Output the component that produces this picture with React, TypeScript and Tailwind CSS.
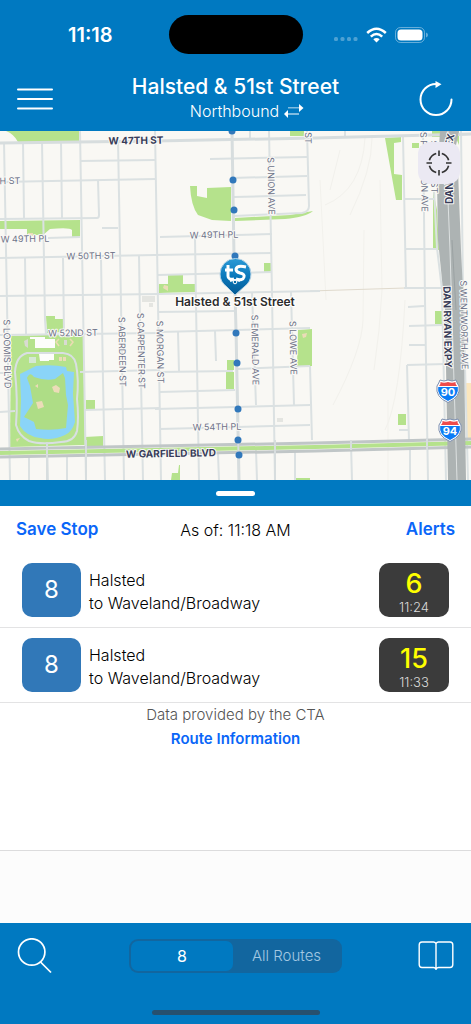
import { useState } from "react";

type Arrival = {
  id: number;
  route: string;
  name: string;
  destination: string;
  minutes: number;
  time: string;
};

const arrivals: Arrival[] = [
  {
    id: 1,
    route: "8",
    name: "Halsted",
    destination: "to Waveland/Broadway",
    minutes: 6,
    time: "11:24",
  },
  {
    id: 2,
    route: "8",
    name: "Halsted",
    destination: "to Waveland/Broadway",
    minutes: 15,
    time: "11:33",
  },
];

const streets = [
  // east-west
  "M80 161L155 160",
  "M0 182L155 179",
  "M0 219L97 218Q99 218 99 215L98 180",
  "M48 238L80 237",
  "M102 228L118 228",
  "M0 258L155 255L272 253",
  "M0 296L160 294L320 291",
  "M0 335L160 333",
  "M0 373L12 373M80 372L160 370",
  "M0 412L15 411M85 410L160 408",
  "M210 159L307 157",
  "M232 178L307 176",
  "M234 197L306 195",
  "M234 216L302 213Q309 212 309 206L307 131",
  "M160 237L272 234",
  "M158 275L272 272",
  "M158 312L234 311",
  "M160 332L310 328",
  "M160 372L233 371M237 369L310 366",
  "M160 392L235 390",
  "M155 409L310 405",
  "M160 429L310 425",
  "M405 199L434 199M405 249L438 249M404 288L442 288",
  "M408 307L424 306M409 326L442 325M409 345L425 345M407 365L445 364M399 430L408 430",
  // north-south
  "M4 142L7 304L10 480",
  "M23 142L24 218M25 258L26 334M29 455L29 480",
  "M42 142L45 320L46 334M47 442L48 480",
  "M61 142L62 218M63 258L64 334M67 455L67 480",
  "M80 131L83 304L86 480",
  "M101 258L103 380L105 480",
  "M118 140L121 304L124 480",
  "M139 256L141 380L143 480",
  "M155 131L158 304L161 480",
  "M178 332L179 371M215 331L216 361",
  "M195 238L196 304L199 480M218 454L219 480",
  "M250 131L250 138M345 131L345 136",
  "M269 131L272 294L275 480",
  "M252 292L256 405M256 450L257 480",
  "M291 292L294 405M295 450L295 480",
  "M310 366L312 440M351 444L352 480",
  "M403 136L406 288M407 365L409 441M410 447L410 480",
  "M423 131L425 300L428 480",
  "M434 190L437 248L442 290L446 480",
  "M461 131L463 290L468 480",
  "M459 135L471 134",
];

const stops = [
  [232, 131],
  [233, 180],
  [234, 210],
  [235, 256],
  [236, 333],
  [237, 363],
  [238, 409],
  [238, 440],
  [239, 455],
];

type Label = { text: string; x: number; y: number; angle?: number };

const labels: Label[] = [
  { text: "H ST", x: 10, y: 184 },
  { text: "W 49TH PL", x: 25, y: 242 },
  { text: "W 50TH ST", x: 91, y: 259 },
  { text: "W 49TH PL", x: 214, y: 238 },
  { text: "W 52ND ST", x: 73, y: 336 },
  { text: "W 54TH PL", x: 217, y: 430 },
  { text: "S UNION AVE", x: 268, y: 186, angle: 89 },
  { text: "ST", x: 305, y: 138, angle: 89 },
  { text: "S PRINCETON AVE", x: 421, y: 172, angle: 89 },
  { text: "S WELLS ST", x: 431, y: 167, angle: 89 },
  { text: "S LOOMIS BLVD", x: 4, y: 354, angle: 89 },
  { text: "S ABERDEEN ST", x: 119, y: 352, angle: 89 },
  { text: "S CARPENTER ST", x: 138, y: 351, angle: 89 },
  { text: "S MORGAN ST", x: 157, y: 352, angle: 89 },
  { text: "S EMERALD AVE", x: 252, y: 350, angle: 89 },
  { text: "S LOWE AVE", x: 290, y: 348, angle: 89 },
  { text: "S WENTWORTH AVE", x: 461, y: 325, angle: 89 },
];

const boldLabels: Label[] = [
  { text: "W 47TH ST", x: 136, y: 144 },
  { text: "W GARFIELD BLVD", x: 171, y: 457 },
  { text: "DAN RYAN EXPY", x: 444, y: 327, angle: 89 },
  { text: "DAN", x: 453, y: 193, angle: -90 },
  { text: "EX", x: 453, y: 141, angle: -75 },
];

const MapLabel = ({ label }: { label: Label }) => (
  <text
    textAnchor="middle"
    transform={`translate(${label.x} ${label.y}) rotate(${label.angle ?? -1})`}
  >
    {label.text}
  </text>
);

const Shield = ({ number, x, y }: { number: string; x: number; y: number }) => (
  <g transform={`translate(${x} ${y})`}>
    <path
      d="M-8 -11Q-4 -9 0 -11Q4 -9 8 -11Q9 -8 11 -5Q13 6 0 11.500Q-13 6 -11 -5Q-9 -8 -8 -11Z"
      fill="#fff"
      stroke="#7d8fb0"
      strokeWidth="1"
    />
    <path d="M-9 -5Q-7 -7 -7.500 -9Q-4 -7.500 0 -9Q4 -7.500 7.500 -9Q7 -7 9 -5Z" fill="#ee4b4b" />
    <path d="M-9.800 -4H9.800Q11.500 5 0 10Q-11.500 5 -9.800 -4Z" fill="#0b7bf5" />
    <text
      y="5"
      textAnchor="middle"
      fontSize="11"
      fontWeight="700"
      fill="#fff"
    >
      {number}
    </text>
  </g>
);

const StopMap = () => (
  <svg
    viewBox="0 131 471 349"
    preserveAspectRatio="xMidYMid slice"
    className="block h-full w-full"
    role="img"
    aria-label="Map of stops near Halsted & 51st Street"
  >
    <defs>
      <linearGradient id="pin" x1="0" y1="0" x2="0" y2="1">
        <stop offset="0" stopColor="#2b9ad6" />
        <stop offset="0.5" stopColor="#0b78bb" />
        <stop offset="1" stopColor="#055a94" />
      </linearGradient>
    </defs>
    <rect y="131" width="471" height="349" fill="#f9f8f4" />

    {/* rail yard */}
    <g fill="none" stroke="#f2f1ec" strokeWidth="1">
      <path d="M365 138Q362 190 325 205M372 138Q372 170 350 215M364 230L363 320Q362 350 333 405M380 180L382 290Q380 330 374 370M405 300Q400 400 385 430M388 400L388 480" />
      <path d="M320 180L326 300M340 150L330 190" />
    </g>
    <path d="M310 291L405 288" stroke="#e0dacd" strokeWidth="1" />
    <rect x="466" y="383" width="5" height="55" fill="#fbe6bd" />
    <path d="M142 296h13v6h-13zM149 303h4v4h-4zM277 418h6v4h-6z" fill="#e4e5e1" />

    {/* parks */}
    <g fill="#b5e28c">
      <path d="M6 131H79V141L18 142Q14 134 6 131Z" />
      <path d="M0 221L80 220V237H72V230Q70 227 50 229L43 235H27V229H0Z" />
      <path d="M190 186H197V196L207 198V188L231 187V221L212 220L198 215Q191 206 190 186Z" />
      <path d="M235 218L290 215L313 211Q306 217 285 219L235 221Z" />
      <path d="M264 263h7v9h-7zM290 131h14v5h-14zM412 143h7v5h-7z" />
      <path d="M159 284H168V275H183V284H195V292L159 293Z" />
      <path d="M385 138L401 137V142L394 143V174L402 175V200H396Z" />
      <path d="M433 190L437 210L439 250H433ZM432 131h8v6h-8zM453 131h6v14z" />
      <path d="M435 311h7v13h-7zM398 414h8v11h-8z" />
      <path d="M298 330L312 329V366H297Z" />
      <path d="M227 360h7v10h-7zM226 372h8v17h-8z" />
      <path d="M171 480L172 473H178L179 465H180V480ZM296 478h14v2h-14z" />
      <path d="M46 316H55V319H63V332L47 333Z" />
      <path d="M11 336L83 334L85 445L10 447Z" />
      <path d="M86 400h9v9h-9zM85 437L103 436V446H86Z" />
    </g>
    <path d="M30 337H45V339H55V348H35V339H30ZM39 354h15v6h-5v1h-9z" fill="#fdfdfb" />
    <path d="M29 357h7v6h-7z" fill="#d5e8d5" />
    <path d="M24 341l4-2v9l-3-2zM64 340h3v5h-3z" fill="#d9dbd2" />
    <path d="M59 339l-3 3l3 4M70 339l3 3l-3 4" fill="none" stroke="#ecdcb2" strokeWidth="1.500" />
    <path d="M59 357h3v4h-3zM63 357h3v4h-3zM28 233h5v3h-5zM302 334l5-1l-1 4l-3 1zM164 285l4 1v5l-5-3zM16 439l4-1l-3 4z" fill="#ecdcb8" />
    <path
      d="M20 374Q28 370 36 366Q52 364 66 367L67 371L74 372L73 394L75 422Q72 432 65 435Q52 441 40 438Q26 436 20 426L21 400Z"
      fill="#8ad4f8"
    />
    <path
      d="M27 378Q30 371 34 377Q45 381 55 379L63 373L65 378L66 395L68 405L66 428Q52 431 36 429L34 422L24 417L33 403L30 386Z"
      fill="#aedd86"
    />
    <path d="M52 387l4-2l4 3l-1 5l-5-1zM35 386l3-2v4zM36 402l6-1l2 6l-6 2z" fill="#ecdcb8" />
    <path
      d="M27 353L63 353Q74 354 76 364Q79 380 77 399Q79 418 77 431Q74 442 61 442Q40 445 29 441Q19 436 16 425Q18 400 15 372Q16 356 27 353Z"
      fill="none"
      stroke="#d9dfe2"
      strokeWidth="2"
    />

    {/* streets */}
    <g fill="none" stroke="#dbe1e2" strokeWidth="2">
      {streets.map((d) => (
        <path key={d} d={d} />
      ))}
    </g>
    <g fill="none" stroke="#d7ddde" strokeWidth="3">
      <path d="M0 143L155 141L315 138L471 134" />
      <path d="M232 131L234 256L236 330L239 480" />
    </g>
    <g fill="none">
      <path d="M0 453L155 450L315 447L471 443" stroke="#b5e28c" strokeWidth="4" />
      <path d="M0 449L155 446L315 443L471 439" stroke="#c0c6c7" strokeWidth="3" />
      <path d="M0 457L155 454L315 451L471 447" stroke="#c0c6c7" strokeWidth="3" />
      <path d="M236 330L239 480M47 442V480M86 440V480M275 440V480M351 440V450M427 438V450" stroke="#d7ddde" strokeWidth="2" />
    </g>

    {/* expressway */}
    <path d="M440 131H459L455 150L458 170L461 250L463 290L466 480H448L445 310L438 240L437 180Z" fill="#adb3b3" />
    <path d="M448 131L446 150L450 250L457 480" fill="none" stroke="#dde1e1" strokeWidth="1" />
    <path d="M452 240L456 310" fill="none" stroke="#9ba2a3" strokeWidth="1" />

    <g
      fontFamily="Inter, 'Liberation Sans', sans-serif"
      stroke="#faf9f6"
      strokeWidth="2"
      strokeLinejoin="round"
      paintOrder="stroke"
    >
      <g fill="#6d7288" fontSize="9">
        {labels.map((label, index) => (
          <MapLabel key={index} label={label} />
        ))}
      </g>
      <g fill="#383d5a" fontSize="10" fontWeight="700">
        {boldLabels.map((label, index) => (
          <MapLabel key={index} label={label} />
        ))}
      </g>
    </g>

    <g fontFamily="Inter, 'Liberation Sans', sans-serif">
      <Shield number="90" x={448} y={391} />
      <Shield number="94" x={450} y={430} />
    </g>

    {stops.map(([x, y]) => (
      <circle key={y} cx={x} cy={y} r="3.500" fill="#3178bb" />
    ))}

    {/* selected stop */}
    <path d="M235 295L227 287Q220 282 220 274A15.500 15.500 0 0 1 251 274Q251 282 244 287Z" fill="url(#pin)" stroke="#b7d4e6" strokeWidth="1" />
    <path d="M228 265V276Q228 280 234 279M225 270H233" fill="none" stroke="#fff" strokeWidth="3" />
    <path d="M246 267Q237 265 236 269Q236 272 240 273Q245 274 244 277Q243 281 236 279" fill="none" stroke="#fff" strokeWidth="3" />
    <path d="M230 281Q235 279 240 281" fill="none" stroke="#fff" strokeWidth="2" />
    <circle cx="235" cy="282" r="1.800" fill="#0b6dab" stroke="#fff" strokeWidth="1" />
    <text
      x="235"
      y="306"
      textAnchor="middle"
      fontFamily="Inter, 'Liberation Sans', sans-serif"
      fontSize="12"
      fontWeight="600"
      fill="#2c2c2c"
      stroke="#fff"
      strokeWidth="2"
      paintOrder="stroke"
    >
      Halsted &amp; 51st Street
    </text>
  </svg>
);

const StatusBar = () => (
  <div className="grid grid-cols-[1fr_134px_1fr] items-center pt-[15px]">
    <div className="pl-3 text-center text-xl font-semibold">11:18</div>
    <div className="h-[39px] rounded-full bg-black" />
    <div className="flex items-center justify-center gap-2 pr-3">
      <svg width="24" height="16" viewBox="0 0 24 16" fill="#fff" opacity="0.3" aria-hidden="true">
        <rect x="0" y="10" width="4" height="4" rx="1.500" />
        <rect x="6.500" y="10" width="4" height="4" rx="1.500" />
        <rect x="13" y="10" width="4" height="4" rx="1.500" />
        <rect x="19.500" y="10" width="4" height="4" rx="1.500" />
      </svg>
      <svg width="21" height="16" viewBox="0 0 21 16" fill="none" stroke="#fff" strokeWidth="2.600" aria-hidden="true">
        <path d="M1.200 6Q10.500 -2.500 19.800 6" />
        <path d="M4.800 9.600Q10.500 4.400 16.200 9.600" />
        <path d="M10.500 15.500L7.300 12.300Q10.500 9.500 13.700 12.300Z" fill="#fff" stroke="none" />
      </svg>
      <svg width="33" height="16" viewBox="0 0 33 16" aria-hidden="true">
        <rect x="0.500" y="0.500" width="29" height="15" rx="5" fill="none" stroke="#fff" strokeOpacity="0.400" />
        <rect x="2.500" y="2.500" width="25" height="11" rx="3.500" fill="#fff" />
        <path d="M31 5.500Q33 6.300 33 8T31 10.500Z" fill="#fff" fillOpacity="0.400" />
      </svg>
    </div>
  </div>
);

const ArrivalRow = ({ arrival }: { arrival: Arrival }) => (
  <li className="flex h-[75px] items-center border-b border-[#e3e3e4] px-[22px]">
    <div className="flex h-[54px] w-[59px] items-center justify-center rounded-[10px] bg-[#3178b8] text-2xl text-white">
      {arrival.route}
    </div>
    <div className="ml-2 flex-1 pt-1 text-base leading-[23px] font-light text-black">
      <p>{arrival.name}</p>
      <p>{arrival.destination}</p>
    </div>
    <div className="flex h-[54px] w-[70px] flex-col items-center justify-center rounded-[10px] bg-[#3b3b3b] pt-1">
      <span className="text-[27px] leading-[30px] font-medium text-[#ffff00]">
        {arrival.minutes}
      </span>
      <span className="text-[13px] leading-4 font-light text-[#dcdcdc]">
        {arrival.time}
      </span>
    </div>
  </li>
);

export default function App() {
  const [filter, setFilter] = useState("8");

  return (
    <main className="flex min-h-screen flex-col bg-white font-['Inter','Liberation_Sans',sans-serif]">
      <header className="h-[131px] bg-[#0079c1] text-white">
        <StatusBar />
        <div className="flex items-center justify-between px-[17px] pt-[21px]">
          <button aria-label="Menu">
            <svg width="36" height="32" viewBox="0 0 36 32" stroke="#fff" strokeWidth="2" strokeLinecap="round">
              <path d="M1 6.500H35M1 16H35M1 25.500H35" />
            </svg>
          </button>
          <div className="text-center">
            <h1 className="text-[21px] leading-6 font-medium">
              Halsted &amp; 51st Street
            </h1>
            <button className="mx-auto flex items-center gap-1 pl-6 text-base leading-6 font-light">
              Northbound
              <svg width="22" height="16" viewBox="0 0 22 16" fill="#fff" aria-hidden="true">
                <path d="M16 1L20.500 5L16 9ZM5 7L1 11L5 15Z" />
                <path d="M5 4.500H16V5.300H5ZM5 10.600H16V11.400H5Z" />
              </svg>
            </button>
          </div>
          <button aria-label="Refresh">
            <svg width="36" height="36" viewBox="0 0 36 36" fill="none">
              <path d="M33.500 18.500A15.500 15.500 0 1 1 18 3" stroke="#fff" strokeWidth="2" strokeLinecap="round" />
              <path d="M17.500 0L23.500 3.300L17.500 7Z" fill="#fff" />
            </svg>
          </button>
        </div>
      </header>

      <section className="relative h-[349px]">
        <StopMap />
        <button
          aria-label="Center map"
          className="absolute top-[11px] right-[11px] flex size-[42px] items-center justify-center rounded-xl bg-[#ebe9f3]"
        >
          <svg width="26" height="26" viewBox="0 0 26 26" fill="none" stroke="#333" strokeWidth="1.600">
            <path d="M15.800 3.400A10 10 0 0 1 22.600 10.200M22.600 15.800A10 10 0 0 1 15.800 22.600M10.200 22.600A10 10 0 0 1 3.400 15.800M3.400 10.200A10 10 0 0 1 10.200 3.400" />
            <path d="M13 0.500V6M13 20V25.500M0.500 13H6M20 13H25.500" />
          </svg>
        </button>
      </section>

      <section>
        <div className="flex h-[26px] items-center justify-center bg-[#0079c1]">
          <div className="h-[5px] w-[39px] rounded-full bg-white" />
        </div>
        <div className="grid h-[47px] grid-cols-3 items-center px-4 text-[17px] font-semibold text-[#0a66f8]">
          <button className="justify-self-start">Save Stop</button>
          <p className="justify-self-center text-base font-light whitespace-nowrap text-black">
            As of: 11:18 AM
          </p>
          <button className="justify-self-end">Alerts</button>
        </div>
        <ul>
          {arrivals.map((arrival) => (
            <ArrivalRow key={arrival.id} arrival={arrival} />
          ))}
        </ul>
        <div className="flex flex-col items-center text-[15px] leading-6">
          <p className="font-light text-[#555]">Data provided by the CTA</p>
          <a href="#route" className="font-semibold text-[#0a66f8]">
            Route Information
          </a>
        </div>
      </section>

      <div className="flex flex-1 flex-col justify-end">
        <div className="h-[73px] border-t border-[#dcdcdd] bg-[#fcfcfc]" />
      </div>

      <footer className="bg-[#0079c1] pb-[9px]">
        <div className="flex items-center justify-between px-[17px] pt-[15px]">
          <button aria-label="Search">
            <svg width="36" height="36" viewBox="0 0 36 36" fill="none" stroke="#fff" strokeWidth="1.700">
              <circle cx="14.700" cy="14" r="13.200" />
              <path d="M23.500 24L34 34.500" />
            </svg>
          </button>
          <div className="grid h-[34px] w-[213px] grid-cols-[102px_1fr] rounded-[9px] bg-[#12669f] p-[2px] text-base font-light">
            {["8", "All Routes"].map((option) => (
              <button
                key={option}
                aria-pressed={filter === option}
                onClick={() => setFilter(option)}
                className={
                  filter === option
                    ? "rounded-[7px] bg-[#0079c1] font-normal text-white"
                    : "text-[15px] text-[#a3c8e2]"
                }
              >
                {option}
              </button>
            ))}
          </div>
          <button aria-label="Schedules">
            <svg width="36" height="32" viewBox="0 0 36 32" fill="none" stroke="#fff" strokeWidth="1.400">
              <path d="M18 3.500Q17 2 15.500 2H4Q1.200 2 1.200 5V24.500Q1.200 27.500 4 27.500H15.500Q17 27.500 18 29Q19 27.500 20.500 27.500H32Q34.800 27.500 34.800 24.500V5Q34.800 2 32 2H20.500Q19 2 18 3.500V30" />
            </svg>
          </button>
        </div>
        <div className="mx-auto mt-9 h-[5px] w-[168px] rounded-full bg-[#27506e]" />
      </footer>
    </main>
  );
}
